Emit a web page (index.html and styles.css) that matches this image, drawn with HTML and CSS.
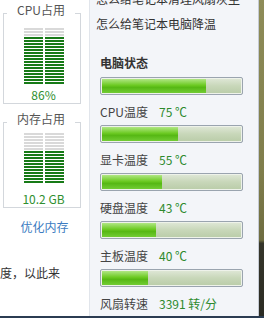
FILE: index.html
```html
<!DOCTYPE html>
<html lang="zh-CN">
<head>
  <meta charset="UTF-8">
  <meta name="viewport" content="width=device-width, initial-scale=1.0">
  <title>电脑状态</title>
  <link rel="stylesheet" href="styles.css">
</head>
<body>
  <div class="screen">
    <div class="window">
      <aside class="sidebar">
        <fieldset class="usage usage-cpu">
          <legend>CPU占用</legend>
          <div class="meter">
            <div class="meter-col">
              <div class="led-off" style="height:9px"></div>
              <div class="led-on" style="height:48px"></div>
            </div>
            <div class="meter-col">
              <div class="led-off" style="height:9px"></div>
              <div class="led-on" style="height:48px"></div>
            </div>
          </div>
          <div class="usage-value">86%</div>
        </fieldset>

        <fieldset class="usage usage-mem">
          <legend>内存占用</legend>
          <div class="meter">
            <div class="meter-col">
              <div class="led-off" style="height:18px"></div>
              <div class="led-on" style="height:33px"></div>
            </div>
            <div class="meter-col">
              <div class="led-off" style="height:18px"></div>
              <div class="led-on" style="height:33px"></div>
            </div>
          </div>
          <div class="usage-value">10.2 GB</div>
        </fieldset>

        <a class="optimize" href="#">优化内存</a>
        <p class="article-tail">度，以此来</p>
      </aside>

      <section class="panel">
        <ul class="tips">
          <li>怎么给笔记本清理风扇灰尘</li>
          <li>怎么给笔记本电脑降温</li>
        </ul>

        <div class="status">
          <h3>电脑状态</h3>
          <div class="stat">
            <div class="bar"><div class="bar-fill" style="width:75%"></div></div>
            <div class="stat-label"><span class="stat-name">CPU温度</span><span class="stat-value">75 ℃</span></div>
          </div>
          <div class="stat">
            <div class="bar"><div class="bar-fill" style="width:55%"></div></div>
            <div class="stat-label"><span class="stat-name">显卡温度</span><span class="stat-value">55 ℃</span></div>
          </div>
          <div class="stat">
            <div class="bar"><div class="bar-fill" style="width:43%"></div></div>
            <div class="stat-label"><span class="stat-name">硬盘温度</span><span class="stat-value">43 ℃</span></div>
          </div>
          <div class="stat">
            <div class="bar"><div class="bar-fill" style="width:39%"></div></div>
            <div class="stat-label"><span class="stat-name">主板温度</span><span class="stat-value">40 ℃</span></div>
          </div>
          <div class="stat">
            <div class="bar"><div class="bar-fill" style="width:33%"></div></div>
            <div class="stat-label"><span class="stat-name">风扇转速</span><span class="stat-value">3391 转/分</span></div>
          </div>
        </div>
      </section>

      <div class="desktop"></div>
    </div>
    <div class="frame-edge"></div>
  </div>
</body>
</html>
```

FILE: styles.css
```css
* {
  box-sizing: border-box;
}
html, body {
  margin: 0;
  padding: 0;
}
body {
  width: 264px;
  height: 318px;
  overflow: hidden;
  font-family: "Noto Sans CJK SC", "Noto Sans", sans-serif;
  font-size: 12px;
  color: #333;
  background: #fff;
}
.screen {
  display: flex;
  flex-direction: column;
  height: 318px;
}
.window {
  flex: 1;
  display: flex;
  min-height: 0;
  overflow: hidden;
}

/* left column */
.sidebar {
  width: 89px;
  flex: none;
  background: #fff;
  padding-top: 2px;
}
.usage {
  margin: 0 0 0 3px;
  width: 78px;
  min-width: 0;
  padding: 0 0 1px;
  border: 1px solid #d3d7dc;
}
.usage legend {
  margin-left: 3px;
  padding: 0 10px 6px;
  line-height: 16px;
  color: #555;
}
.usage-mem {
  margin-top: 7px;
}
.meter {
  display: flex;
  justify-content: center;
  gap: 2px;
  padding: 4px 0 0 3px;
}
.usage-mem .meter {
  padding-top: 0;
}
.meter-col {
  width: 19px;
  display: flex;
  flex-direction: column;
}
.led-off {
  background: repeating-linear-gradient(to bottom, #d9d9d9 0 2px, transparent 2px 3px);
}
.led-on {
  background: repeating-linear-gradient(to bottom, #177a17 0 2px, transparent 2px 3px);
}
.usage-value {
  margin-top: 3px;
  padding-left: 3px;
  text-align: center;
  line-height: 14px;
  color: #2f8f2f;
}
.usage-mem .usage-value {
  margin-top: 8px;
}
.optimize {
  display: block;
  margin-top: 12px;
  text-align: center;
  line-height: 14px;
  color: #3d7cc1;
  text-decoration: none;
}
.article-tail {
  margin: 32px 0 0;
  line-height: 14px;
  white-space: nowrap;
}

/* right panel */
.panel {
  width: 170px;
  flex: none;
  overflow: hidden;
  background: #f3f5f9;
  border-left: 1px solid #e1e5eb;
  border-right: 1px solid #c4cad3;
}
.tips {
  list-style: none;
  margin: -14px 0 0;
  padding: 0 0 0 6px;
  line-height: 25px;
  white-space: nowrap;
}
.status {
  margin-top: 20px;
  padding-left: 10px;
}
.status h3 {
  margin: 0;
  font-size: 12px;
  font-weight: bold;
  line-height: 14px;
  color: #333;
}
.stat {
  padding-top: 7px;
}
.bar {
  width: 143px;
  height: 18px;
  padding: 1px;
  border: 1px solid #9aa4af;
  border-radius: 2px;
  background: linear-gradient(to bottom, #e0e8d8, #c8d7b9 50%, #b9cca8);
  box-shadow: inset 0 0 0 1px #eef2ea;
}
.bar-fill {
  height: 100%;
  background: linear-gradient(to bottom, #b0e684, #6cca22 45%, #56b814 60%, #72cc34);
}
.stat-label {
  margin-top: 10px;
  line-height: 13px;
  white-space: nowrap;
}
.stat-name {
  display: inline-block;
  width: 59px;
  color: #444;
}
.stat-value {
  color: #2d8a2d;
}

/* desktop strip and window edge */
.desktop {
  flex: 1;
  background: linear-gradient(to bottom, #8e8c58, #7f7d4b 55%, #6e6c40 76%, #35352a 77%, #2b2b23);
}
.frame-edge {
  height: 2px;
  background: #2b3c52;
}
```
